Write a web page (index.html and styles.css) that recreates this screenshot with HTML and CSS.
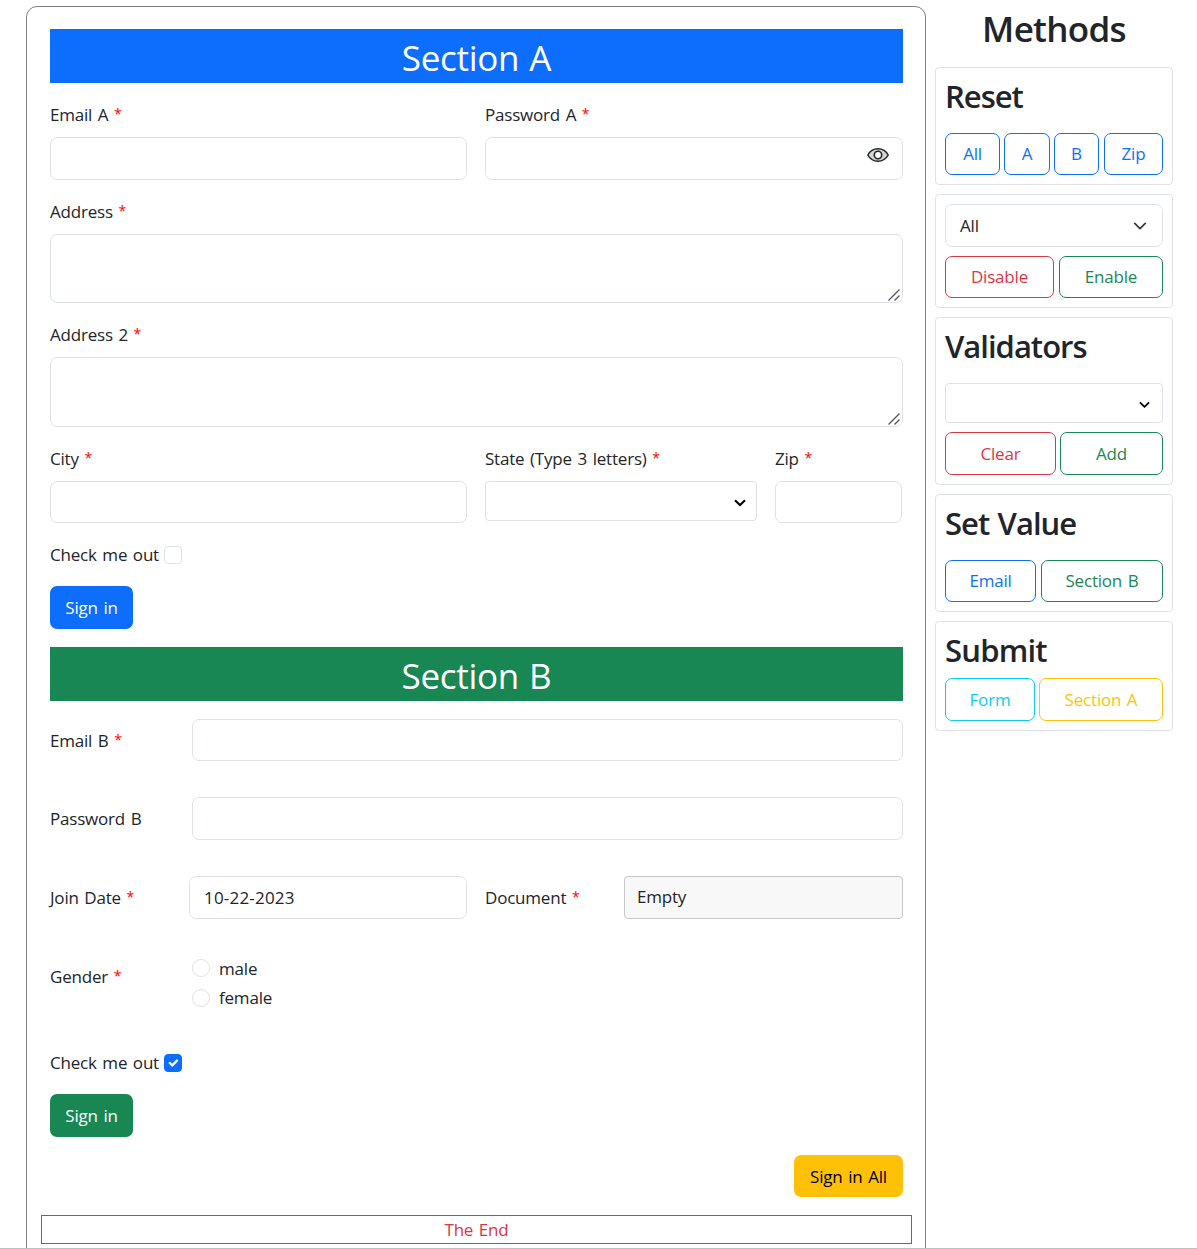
FILE: index.html
```html
<!DOCTYPE html>
<html lang="en">
<head>
<meta charset="utf-8">
<title>Form</title>
<link rel="stylesheet" href="styles.css">
</head>
<body>
<div class="page">
  <form class="panel">
    <h1 class="banner banner-blue">Section A</h1>
    <div class="row">
      <div class="field half">
        <label class="label">Email A <span class="req">*</span></label>
        <div class="input"></div>
      </div>
      <div class="field half">
        <label class="label">Password A <span class="req">*</span></label>
        <div class="input input-icon">
          <svg class="eye" viewBox="0 0 22 16" width="22" height="16"><path d="M.8 8C5.2-.5 16.800-.5 21.200 8C16.800 16.200 5.200 16.200.8 8Z" fill="#d3d4d5" stroke="#212529" stroke-width="1.500"/><circle cx="11" cy="8" r="3.700" fill="#fff" stroke="#212529" stroke-width="1.600"/></svg>
        </div>
      </div>
    </div>
    <div class="field">
      <label class="label">Address <span class="req">*</span></label>
      <div class="input area"><svg class="grip" viewBox="0 0 12 12" width="12" height="12"><path d="M.5 11.500L11.500.5M6.500 11.500L11.500 6.500" stroke="#555" stroke-width="1.300"/></svg></div>
    </div>
    <div class="field">
      <label class="label">Address 2 <span class="req">*</span></label>
      <div class="input area area-tall"><svg class="grip" viewBox="0 0 12 12" width="12" height="12"><path d="M.5 11.500L11.500.5M6.500 11.500L11.500 6.500" stroke="#555" stroke-width="1.300"/></svg></div>
    </div>
    <div class="row">
      <div class="field half">
        <label class="label">City <span class="req">*</span></label>
        <div class="input short"></div>
      </div>
      <div class="field state">
        <label class="label">State (Type 3 letters) <span class="req">*</span></label>
        <div class="input select"><svg class="chev" viewBox="0 0 12 8" width="12" height="8"><path d="M1 1.200L6 6L11 1.200" fill="none" stroke="#000" stroke-width="2"/></svg></div>
      </div>
      <div class="field zip">
        <label class="label">Zip <span class="req">*</span></label>
        <div class="input short"></div>
      </div>
    </div>
    <div class="check-row"><span class="check-text">Check me out</span><span class="checkbox"></span></div>
    <button type="button" class="btn solid blue">Sign in</button>

    <h1 class="banner banner-green">Section B</h1>
    <div class="line">
      <label class="label side">Email B <span class="req">*</span></label>
      <div class="input short grow"></div>
    </div>
    <div class="line">
      <label class="label side">Password B</label>
      <div class="input grow"></div>
    </div>
    <div class="line line-split">
      <label class="label">Join Date <span class="req">*</span></label>
      <div class="input value">10-22-2023</div>
      <label class="label">Document <span class="req">*</span></label>
      <div class="input file">Empty</div>
    </div>
    <div class="line gender">
      <label class="label side">Gender <span class="req">*</span></label>
      <div class="radios">
        <div class="option"><span class="radio"></span><span>male</span></div>
        <div class="option"><span class="radio"></span><span>female</span></div>
      </div>
    </div>
    <div class="check-row"><span class="check-text">Check me out</span><span class="checkbox checked"><svg viewBox="0 0 20 20" width="16" height="16"><path d="M6 10l3 3l6-6" fill="none" stroke="#fff" stroke-width="3" stroke-linecap="round" stroke-linejoin="round"/></svg></span></div>
    <button type="button" class="btn solid green">Sign in</button>
    <button type="button" class="btn solid yellow">Sign in All</button>
    <div class="end">The End</div>
  </form>

  <aside class="sidebar">
    <h1 class="title">Methods</h1>
    <section class="card">
      <h2 class="heading">Reset</h2>
      <div class="buttons cols-reset">
        <button type="button" class="btn o-blue">All</button>
        <button type="button" class="btn o-blue">A</button>
        <button type="button" class="btn o-blue">B</button>
        <button type="button" class="btn o-blue">Zip</button>
      </div>
    </section>
    <section class="card">
      <div class="input dropdown"><span>All</span><svg viewBox="0 0 16 16" width="14" height="14"><path d="m2 5 6 6 6-6" fill="none" stroke="#343a40" stroke-width="2" stroke-linecap="round" stroke-linejoin="round"/></svg></div>
      <div class="buttons cols-toggle">
        <button type="button" class="btn o-red">Disable</button>
        <button type="button" class="btn o-green">Enable</button>
      </div>
    </section>
    <section class="card">
      <h2 class="heading">Validators</h2>
      <div class="input select narrow"><svg class="chev" viewBox="0 0 12 8" width="11" height="8"><path d="M1 1.200L6 6L11 1.200" fill="none" stroke="#000" stroke-width="2"/></svg></div>
      <div class="buttons cols-valid">
        <button type="button" class="btn tall o-red">Clear</button>
        <button type="button" class="btn tall o-green">Add</button>
      </div>
    </section>
    <section class="card">
      <h2 class="heading">Set Value</h2>
      <div class="buttons cols-set">
        <button type="button" class="btn o-blue">Email</button>
        <button type="button" class="btn o-green">Section B</button>
      </div>
    </section>
    <section class="card">
      <h2 class="heading tight">Submit</h2>
      <div class="buttons cols-submit">
        <button type="button" class="btn tall o-cyan">Form</button>
        <button type="button" class="btn tall o-yellow">Section A</button>
      </div>
    </section>
  </aside>
</div>
</body>
</html>
```

FILE: styles.css
```css
* { box-sizing: border-box; }

body {
  margin: 0;
  background: #fff;
  color: #212529;
  font: 400 17px/27px "Open Sans", "Noto Sans", sans-serif;
  letter-spacing: -0.2px;
  word-spacing: 1.4px;
}

.page {
  display: flex;
  align-items: flex-start;
  gap: 9px;
  height: 1249px;
  padding: 6px 24px 0 26px;
  border-bottom: 1px solid #bfbfbf;
  overflow: hidden;
}

.panel {
  display: flex;
  flex-direction: column;
  gap: 18px;
  width: 900px;
  height: 1260px;
  padding: 22px 22px 0 23px;
  border: 1px solid #808080;
  border-radius: 11px;
}

.banner {
  margin: 0;
  height: 54px;
  color: #fff;
  font-size: 35px;
  font-weight: 400;
  line-height: 58px;
  letter-spacing: -0.3px;
  text-align: center;
}
.banner-blue { background: #0d6efd; }
.banner-green { background: #198754; }

.row { display: flex; gap: 18px; }
.field { display: flex; flex-direction: column; gap: 9px; }
.half { width: 417px; }
.half:nth-child(2) { width: 418px; }
.state { width: 272px; }
.zip { width: 127px; }

.label { white-space: nowrap; }
.req { color: #f00; font-size: 14px; line-height: 1; vertical-align: 2px; }

.input {
  height: 43px;
  border: 1px solid #dee2e6;
  border-radius: 7px;
  background: #fff;
}
.short { height: 42px; }
.input-icon { display: flex; justify-content: flex-end; padding: 9px 13px 0 0; }
.area { display: flex; justify-content: flex-end; align-items: flex-end; height: 69px; padding: 0 2px 1px 0; }
.area-tall { height: 70px; }
.select {
  display: flex;
  align-items: center;
  justify-content: flex-end;
  height: 40px;
  padding: 3px 10px 0 0;
  border-color: #e0e0eb;
  border-radius: 4px;
}
.narrow { padding-right: 12px; }

.check-row { display: flex; align-items: center; height: 27px; }
.check-text { width: 114px; }
.checkbox {
  display: flex;
  width: 18px;
  height: 18px;
  border: 1px solid #dee2e6;
  border-radius: 4px;
}
.checked { border-color: #0d6efd; background: #0d6efd; }

.btn {
  height: 42px;
  padding: 0 0 2px;
  border: 1px solid;
  border-radius: 7px;
  background: none;
  font: inherit;
  letter-spacing: inherit;
  word-spacing: inherit;
  text-align: center;
}
.tall { height: 43px; padding-bottom: 1px; }
.solid { width: 83px; height: 43px; padding: 0; border: 0; color: #fff; }
.blue { background: #0d6efd; }
.green { background: #198754; }
.yellow { align-self: flex-end; width: 109px; height: 42px; background: #ffc107; color: #000; }
.o-blue { color: #0d6efd; }
.o-red { color: #dc3545; }
.o-green { color: #198754; }
.o-cyan { color: #0dcaf0; }
.o-yellow { color: #ffc107; }

.line { display: flex; align-items: center; margin-bottom: 18px; }
.side { width: 142px; }
.grow { flex: 1; }
.line-split { display: grid; grid-template-columns: 139px 278px 157px 279px; }
.line-split .label:nth-of-type(2) { padding-left: 18px; }
.value { padding: 7px 14px; letter-spacing: 0.2px; }
.file { padding: 6px 12px; border-color: #c8c8c8; border-radius: 4px; background: #f8f8f8; }
.gender { height: 58px; align-items: flex-start; }
.gender .label { padding-top: 8px; }
.option { display: flex; align-items: center; gap: 9px; height: 29px; }
.option:first-child { height: 27px; }
.radios { display: flex; flex-direction: column; gap: 1px; }
.radio { width: 18px; height: 18px; border: 1px solid #dee2e6; border-radius: 50%; }
.option:first-child .radio { margin-bottom: 1px; }

.end {
  height: 29px;
  margin: 0 -9px;
  border: 1px solid #dc3545;
  color: #dc3545;
  text-align: center;
}

.sidebar { display: flex; flex-direction: column; gap: 9px; width: 238px; }
.title {
  margin: 0;
  height: 52px;
  font-size: 35px;
  font-weight: 600;
  line-height: 45px;
  letter-spacing: -0.7px;
  text-align: center;
}
.card { display: flex; flex-direction: column; gap: 9px; padding: 9px; border: 1px solid #dee2e6; border-radius: 4px; }
.heading {
  margin: 0;
  height: 47px;
  font-size: 31px;
  font-weight: 600;
  line-height: 38px;
  letter-spacing: -1px;
}
.tight { height: 38px; letter-spacing: -0.8px; }
.buttons { display: grid; justify-content: space-between; }
.cols-reset { grid-template-columns: 55px 46px 45px 59px; column-gap: 4px; justify-content: start; }
.cols-reset .btn:last-child { margin: 0 -1px 0 1px; }
.cols-toggle { grid-template-columns: 109px 104px; }
.cols-valid { grid-template-columns: 111px 103px; }
.cols-set { grid-template-columns: 91px 122px; }
.cols-submit { grid-template-columns: 90px 124px; }
.dropdown { display: flex; align-items: center; justify-content: space-between; padding: 0 15px 0 14px; }
```
